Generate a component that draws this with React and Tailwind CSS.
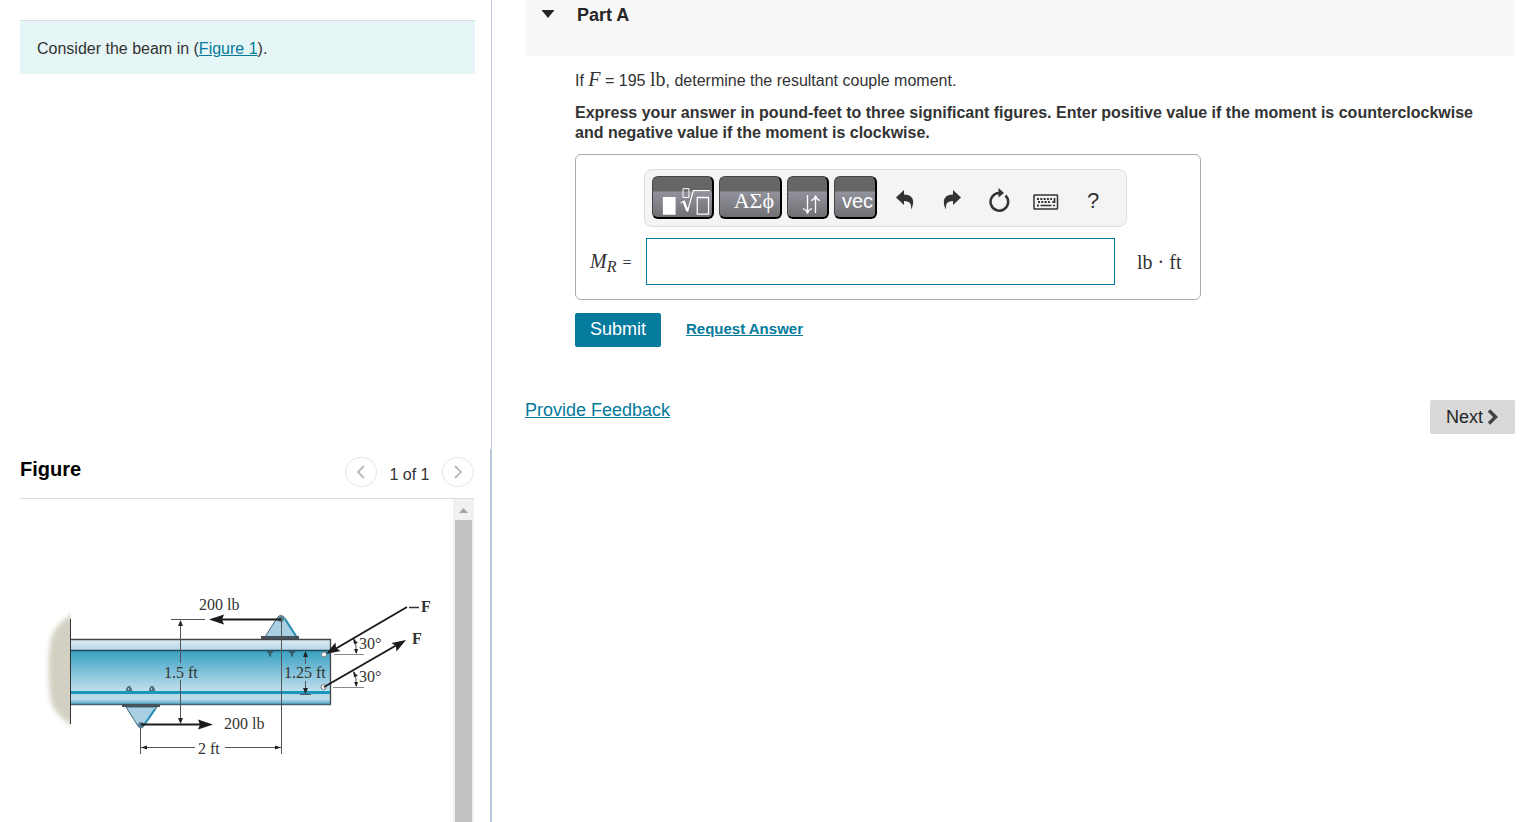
import React, { useState } from "react";

const toolButton =
  "flex h-[43px] items-end rounded-md border border-r-2 border-b-2 border-[#444] border-r-black border-b-black bg-[linear-gradient(#666_0,#666_14px,#92929c_15px,#6f6f73_100%)] text-white overflow-hidden";

const iconButton = "flex h-8 w-8 items-center justify-center text-[#333]";

function BeamFigure() {
  return (
    <svg
      viewBox="20 499 433 320"
      className="block h-[320px] w-[433px]"
      fontFamily="'Liberation Serif', serif"
      fontSize="16"
      fill="#333"
      role="img"
      aria-label="Beam"
    >
      <defs>
        <linearGradient id="web" x1="0" y1="0" x2="0" y2="1">
          <stop offset="0" stopColor="#38a2c3" />
          <stop offset="0.45" stopColor="#78bdd7" />
          <stop offset="1" stopColor="#c3e1ef" />
        </linearGradient>
        <linearGradient id="flange" x1="0" y1="0" x2="0" y2="1">
          <stop offset="0" stopColor="#deedf6" />
          <stop offset="1" stopColor="#b4d5e6" />
        </linearGradient>
        <linearGradient id="lower" x1="0" y1="0" x2="0" y2="1">
          <stop offset="0" stopColor="#b5d6e7" />
          <stop offset="0.55" stopColor="#bedceb" />
          <stop offset="1" stopColor="#55acce" />
        </linearGradient>
        <filter id="soft" x="-30%" y="-10%" width="160%" height="120%">
          <feGaussianBlur stdDeviation="2.5" />
        </filter>
        <clipPath id="wallClip">
          <rect x="40" y="600" width="31" height="140" />
        </clipPath>
      </defs>

      {/* Wall */}
      <g clipPath="url(#wallClip)">
        <path d="M80 611Q52 622 50 645Q47 670 50 696Q52 716 80 730Z" fill="#d2d0c2" filter="url(#soft)" />
      </g>
      <path d="M70.5 619V724" stroke="#333" />

      {/* Beam */}
      <rect x="71" y="639" width="259" height="12" fill="url(#flange)" />
      <rect x="71" y="651" width="259" height="41" fill="url(#web)" />
      <rect x="71" y="693" width="259" height="11" fill="url(#lower)" />
      <path d="M71 692.5H330" stroke="#1797b9" strokeWidth="3" />
      <path d="M71 639.5H330.5V704" stroke="#444" fill="none" strokeWidth="1.3" />
      <path d="M71 650.5H330" stroke="#234b5b" strokeWidth="1.5" />
      <path d="M71 704.5H331" stroke="#456373" strokeWidth="1.5" />

      {/* Bolts */}
      <path d="M126 691v-2l2-3h2l2 3v2zM149 691v-2l2-3h2l2 3v2z" fill="#536f7b" />
      <path d="M128.500 688v2M151.500 688v2" stroke="#a9cfe3" />
      <path d="M266 651h8l-3 3v2l-1 1-1-1v-2zM288 651h8l-3 3v2l-1 1-1-1v-2z" fill="#365b6a" />

      {/* Brackets */}
      <path d="M265 637L277 618Q280.500 613 285 618L297 637Z" fill="#a9cfe3" stroke="#426778" />
      <path d="M285 619L296 636" stroke="#2990b6" strokeWidth="2" />
      <rect x="261" y="636" width="38" height="3" fill="#46525b" />
      <path d="M126 707L138 726Q141 730 144 726L157 707Z" fill="#a9cfe3" stroke="#426778" />
      <path d="M155 709L144 725" stroke="#2990b6" strokeWidth="2" />
      <rect x="122" y="704" width="38" height="3" fill="#46525b" />
      <circle cx="281" cy="619" r="3" fill="#557f91" />
      <circle cx="141" cy="725" r="3" fill="#557f91" />

      {/* Dimension lines */}
      <g stroke="#555" fill="none">
        <path d="M171 619.500H205M180.500 621V663M180.500 680V723" />
        <path d="M140.500 728V754M281.500 619V754" />
        <path d="M141 747.500H195M225 747.500H281" />
        <path d="M305.500 652V664M305.500 681V693M300 694.500H311" />
        <path d="M334 654.500H364M333 687.500H364" stroke="#888" />
        <path d="M354 639Q357 646 356 653M354 672Q357 679 356 686" />
      </g>
      <g fill="#222">
        <path d="M180.500 620l2.500 6h-5zM180.500 724l2.500-6h-5z" />
        <path d="M141 747.500l6-2v4zM281 747.500l-6-2v4z" />
        <path d="M305.500 651l2.500 6h-5zM305.500 694l2.500-6h-5z" />
        <path d="M353 638l5 5-4 1zM356.500 654l-2.500-5h4zM353 671l5 5-4 1zM356.500 687l-2.500-5h4z" />
      </g>

      {/* Forces */}
      <circle cx="324" cy="654.5" r="2.500" fill="#fff" stroke="#777" />
      <circle cx="323.500" cy="687" r="2.500" fill="#fff" stroke="#777" />
      <g stroke="#1d1a1b" strokeWidth="2">
        <path d="M281 619.500H220M141 724.500H202M407 607L336 648.500M324 687L396 645.500" />
      </g>
      <g fill="#1d1a1b">
        <path d="M209 619.500l15-5-2 5 2 5z" />
        <path d="M213 724.500l-15-5 2 5-2 5z" />
        <path d="M326 654l9.500-11.500.5 5.500 4.500 3z" />
        <path d="M406 640l-9.500 11.500-.5-5.500-4.500-3z" />
      </g>

      {/* Labels */}
      <text x="199" y="610">200 lb</text>
      <text x="224" y="729">200 lb</text>
      <text x="164" y="678">1.5 ft</text>
      <text x="284" y="678">1.25 ft</text>
      <text x="198" y="754">2 ft</text>
      <text x="359" y="649">30°</text>
      <text x="359" y="682">30°</text>
      <path d="M409 607.500H419" stroke="#333" strokeWidth="1.500" />
      <text x="421" y="612" fontWeight="bold">F</text>
      <text x="412" y="644" fontWeight="bold">F</text>
    </svg>
  );
}

function Chevron({ d }) {
  return (
    <svg viewBox="0 0 12 14" className="h-3.5 w-3" fill="none" stroke="#bbb" strokeWidth="2">
      <path d={d} />
    </svg>
  );
}

function FigurePanel() {
  return (
    <section id="figure" className="flex h-[373px] flex-col border-r-2 border-[#b8c9dc] pr-4 pl-5">
      <div className="flex h-[50px] shrink-0 items-start justify-between border-b border-[#ddd]">
        <h2 className="pt-2 text-xl leading-6 font-bold text-black">Figure</h2>
        <div className="flex items-center pt-2">
          <button aria-label="Previous figure" className="flex h-[30px] w-8 items-center justify-center rounded-[50%] border border-[#e5e5e5]">
            <Chevron d="M9 1L3 7l6 6" />
          </button>
          <span className="w-[65px] pt-1.5 text-center text-base leading-5">1 of 1</span>
          <button aria-label="Next figure" className="flex h-[30px] w-8 items-center justify-center rounded-[50%] border border-[#e5e5e5]">
            <Chevron d="M3 1l6 6-6 6" />
          </button>
        </div>
      </div>
      <div className="flex min-h-0 flex-1">
        <div className="min-w-0 flex-1 overflow-hidden">
          <BeamFigure />
        </div>
        {/* Scrollbar */}
        <div className="flex w-[21px] shrink-0 flex-col items-center bg-[#f1f1f1]">
          <svg viewBox="0 0 21 21" className="h-[21px] w-[21px] shrink-0" fill="#a3a3a3">
            <path d="M6 14h9L10.500 9z" />
          </svg>
          <div className="w-[17px] flex-1 bg-[#c1c1c1]" />
        </div>
      </div>
    </section>
  );
}

function Toolbar() {
  return (
    <div className="flex h-[58px] w-[483px] items-start rounded-lg border border-[#ddd] bg-[#f4f4f4] pt-1.5 pl-[7px]">
      <div className="flex gap-[5px]">
        <button aria-label="Templates" className={`${toolButton} w-[62px]`}>
          <svg viewBox="0 0 60 40" className="h-10 w-[60px]" fill="none" stroke="#fff">
            <path d="M10 20h13v18H10z" fill="#fff" stroke="none" />
            <path d="M30.500 11.500h6v9h-6z" />
            <path d="M28 26l4-2" />
            <path d="M31 24l4 10" strokeWidth="2.500" />
            <path d="M35 35l6-21.500h17" strokeWidth="1.300" />
            <path d="M45 20.500h11.500v17H45z" strokeWidth="1.300" />
          </svg>
        </button>
        <button aria-label="Symbols" className={`${toolButton} w-[63px] justify-end pr-1.5 pb-1 font-['Liberation_Serif',serif] text-[22px] leading-6`}>
          ΑΣϕ
        </button>
        <button aria-label="Arrows" className={`${toolButton} w-[42px] justify-end`}>
          <svg viewBox="0 0 40 40" className="h-10 w-10 shrink-0" fill="none" stroke="#fff" strokeWidth="1.300">
            <path d="M20.500 18v18M16 31.500q3.500 1 4.500 5 1-4 4.500-5M28.500 36V19M24 23.500q3.500-1 4.500-5 1 4 4.500 5" />
            <path d="M1 17v1M1 21v1" stroke="#333" />
          </svg>
        </button>
        <button aria-label="Vector" className={`${toolButton} w-[43px] justify-end pr-0.5 pb-1 text-xl leading-6`}>
          vec
        </button>
      </div>
      <div className="mt-2 ml-3 flex gap-[15px]">
        <button aria-label="Undo" className={iconButton}>
          <svg viewBox="0 0 18 20" className="h-5 w-[18px]" fill="currentColor">
            <path d="M0 7.500L8 0v4.500c7 0 10 4 9 9.500-.3 2-1 4-2 5.500.5-5-.5-8.500-7-8.500V15z" />
          </svg>
        </button>
        <button aria-label="Redo" className={iconButton}>
          <svg viewBox="0 0 18 20" className="h-5 w-[18px]" fill="currentColor">
            <path d="M18 7.500L10 0v4.500C3 4.500 0 8.500 1 14c.3 2 1 4 2 5.500C2.500 14.500 3.500 11 10 11v4z" />
          </svg>
        </button>
        <button aria-label="Reset" className={iconButton}>
          <svg viewBox="0 0 22 24" className="h-6 w-[22px]" fill="none" stroke="currentColor" strokeWidth="2.500">
            <path d="M17.500 7.500A8.800 8.800 0 1 1 11 5" />
            <path d="M10.500 0l5.500 5-5.500 4.500z" fill="currentColor" stroke="none" />
          </svg>
        </button>
        <button aria-label="Keyboard shortcuts" className={`${iconButton} pt-1`}>
          <svg viewBox="0 0 26 16" className="h-4 w-[26px]" fill="none" stroke="currentColor">
            <rect x="1" y="1" width="23.500" height="14" rx="0.500" strokeWidth="1.500" />
            <path d="M4 5h15M5 8h13M4 11.500h2" strokeWidth="2" strokeDasharray="2 1.300" />
            <path d="M7.500 11.500h11M20 11.500h2M21.500 4v5M19 8h3" strokeWidth="1.700" />
          </svg>
        </button>
        <button aria-label="Help" className={`${iconButton} text-[22px]`}>
          ?
        </button>
      </div>
    </div>
  );
}

function App() {
  const [answer, setAnswer] = useState("");

  return (
    <div className="flex min-h-screen bg-white font-['Liberation_Sans',Arial,sans-serif] text-base text-[#333]">
      {/* Left column */}
      <aside className="flex w-[492px] shrink-0 flex-col">
        <div className="flex-1 border-r border-[#c0c8da] pt-5 pr-4 pl-5">
          <div className="border-t border-[#ddd] bg-[#e6f6f6] px-[17px] pt-[17px] pb-[15px] leading-[21px]">
            Consider the beam in (
            <a href="#figure" className="text-[#047a9c] underline">Figure 1</a>).
          </div>
        </div>
        <FigurePanel />
      </aside>

      {/* Right column */}
      <main className="min-w-0 flex-1 pr-[7px] pl-[33px]">
        <div className="flex h-14 items-start bg-[#f8f8f8] pt-1 pl-4">
          <button aria-label="Toggle Part A" className="flex h-5 w-9 items-center">
            <svg viewBox="0 0 14 8" className="h-2 w-3.5" fill="#252525">
              <path d="M.500 0h13L7 8z" />
            </svg>
          </button>
          <h2 className="text-lg leading-[22px] font-bold text-[#252525]">Part A</h2>
        </div>

        <div className="pl-[50px]">
          <p className="pt-[11px] leading-6">
            If <span className="font-['Liberation_Serif',serif] text-xl leading-6 italic">F</span> = 195{" "}
            <span className="font-['Liberation_Serif',serif] text-xl leading-6">lb</span>, determine the resultant couple moment.
          </p>
          <p className="mt-2.5 pr-4 leading-5 font-bold">
            Express your answer in pound-feet to three significant figures. Enter positive value if the moment is counterclockwise and negative value if the moment is clockwise.
          </p>

          {/* Answer box */}
          <div className="mt-[11px] h-[146px] w-[626px] rounded-md border border-[#aaa] pt-3.5">
            <div className="pl-[68px]">
              <Toolbar />
            </div>
            <div className="mt-[11px] flex items-center">
              <label htmlFor="answer" className="w-[70px] pl-3.5 font-['Liberation_Serif',serif] text-xl leading-6 whitespace-nowrap">
                <i>M</i>
                <sub className="text-base italic">R</sub>
                <span className="pl-1.5 text-base">=</span>
              </label>
              <input
                id="answer"
                type="text"
                value={answer}
                onChange={(e) => setAnswer(e.target.value)}
                className="h-[47px] w-[469px] border border-[#047a9c] px-2 outline-none"
              />
              <span className="pl-[22px] font-['Liberation_Serif',serif] text-xl leading-6">lb · ft</span>
            </div>
          </div>

          <div className="mt-[13px] flex items-center">
            <button className="h-[34px] w-[86px] rounded-xs bg-[#047a9c] pb-0.5 text-lg leading-6 text-white">Submit</button>
            <a href="#answer" className="ml-[25px] pb-0.5 text-[15px] leading-5 font-bold text-[#047a9c] underline">
              Request Answer
            </a>
          </div>
        </div>

        <div className="mt-[53px] flex items-start justify-between">
          <a href="#feedback" className="text-lg leading-5 text-[#047a9c] underline">Provide Feedback</a>
          <button className="flex h-[34px] w-[85px] items-center justify-center gap-1 rounded-xs bg-[#d9d9d9] text-lg text-[#252525]">
            Next
            <svg viewBox="0 0 12 16" className="h-4 w-3" fill="none" stroke="#444" strokeWidth="3.500">
              <path d="M2 1.500L8.500 8 2 14.500" />
            </svg>
          </button>
        </div>
      </main>
    </div>
  );
}

export default App;
